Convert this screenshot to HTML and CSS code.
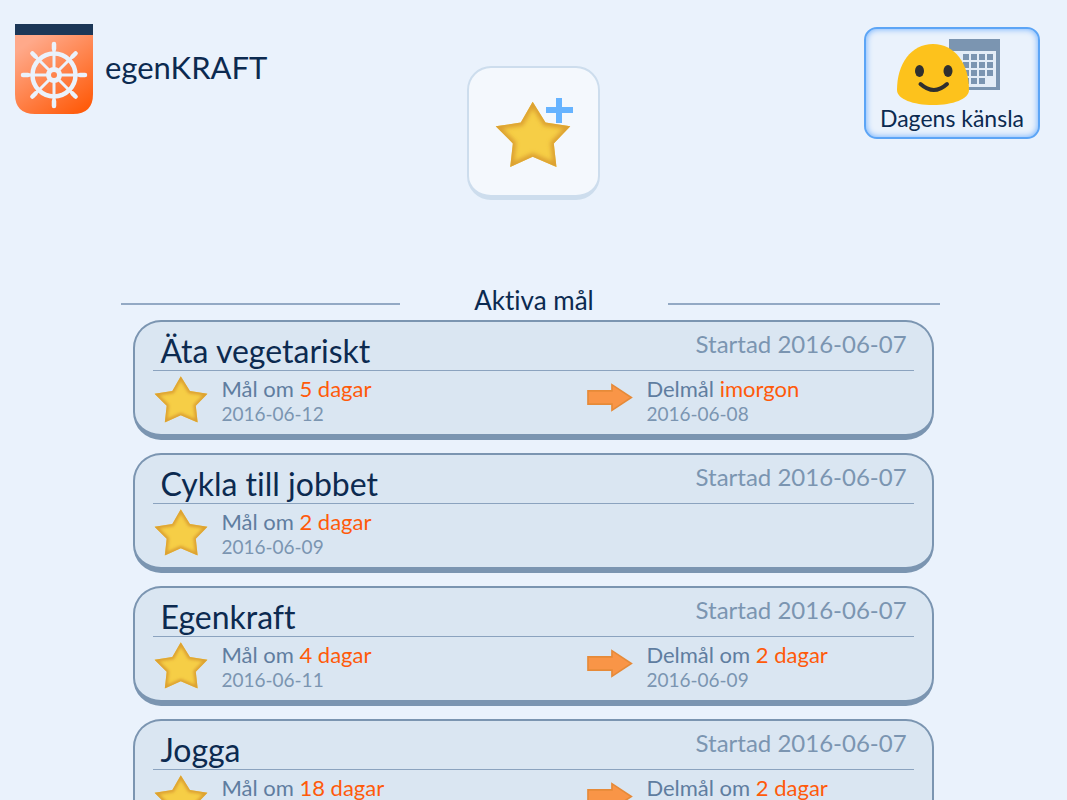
FILE: index.html
```html
<!DOCTYPE html>
<html lang="sv">
<head>
    <meta charset="utf-8">
    <title>egenKRAFT</title>
    <meta name="viewport" content="width=device-width, initial-scale=1.0">
    <link rel="stylesheet" href="styles.css">
</head>
<body>
    <!-- Shared icons -->
    <svg class="icon-defs" aria-hidden="true">
        <defs>
            <filter id="soft" x="-20%" y="-20%" width="140%" height="140%"><feGaussianBlur stdDeviation="6"/></filter>
            <path id="star-shape" d="M114 1 153 64 228 75 178 127 186 198 114 167 46 198 54 127 2 75 78 64Z"/>
            <clipPath id="star-clip"><use href="#star-shape"/></clipPath>
            <symbol id="star" viewBox="0 0 230 200">
                <use href="#star-shape" fill="#f6ce46"/>
                <g clip-path="url(#star-clip)">
                    <use href="#star-shape" fill="none" stroke="#dca030" stroke-width="20" filter="url(#soft)"/>
                </g>
            </symbol>
            <symbol id="arrow" viewBox="0 0 140 88">
                <path d="M3 24H76V5L135 44 76 83V64H3Z" fill="#f99547" stroke="#e68a38" stroke-width="5"/>
            </symbol>
        </defs>
    </svg>

    <header class="top">
        <div class="brand">
            <svg class="logo" viewBox="0 0 78 90" aria-hidden="true">
                <defs>
                    <linearGradient id="logo-fill" x1="0.1" y1="0" x2="0.8" y2="1">
                        <stop offset="0.1" stop-color="#ffa98a"/>
                        <stop offset="1" stop-color="#ff5c0c"/>
                    </linearGradient>
                </defs>
                <path d="M0 11H78V70Q78 90 58 90H20Q0 90 0 70Z" fill="url(#logo-fill)"/>
                <path d="M0 0H78V11H0Z" fill="#1c3757"/>
                <g fill="none" stroke="#eaf2fc" stroke-linecap="round">
                    <circle cx="39" cy="51" r="21.500" stroke-width="4.500"/>
                    <circle cx="39" cy="51" r="5.500" stroke-width="5"/>
                    <path d="M39 44V20M39 58V82M32 51H8M46 51H70M34 46 17 29M44 46 61 29M34 56 17 73M44 56 61 73" stroke-width="3"/>
                    <path d="M39 25V20M39 77V82M13 51H8M65 51H70M20.500 32.500 17.500 29.500M57.500 32.500 60.500 29.500M20.500 69.500 17.500 72.500M57.500 69.500 60.500 72.500" stroke-width="4.500"/>
                </g>
            </svg>
            <h1>egenKRAFT</h1>
        </div>

        <button class="add-goal" type="button" aria-label="Nytt mål">
            <svg viewBox="0 0 78 70" aria-hidden="true">
                <use href="#star" x="0" y="3" width="76" height="67"/>
                <path d="M61 0H67V9H78V15H67V25H61V15H51V9H61Z" fill="#66b3ff"/>
            </svg>
        </button>

        <button class="mood" type="button">
            <svg viewBox="0 0 104 66" aria-hidden="true">
                <g>
                    <path d="M52 0H103V51H52Z" fill="#7b95b1"/>
                    <path d="M54 12H99V48H54Z" fill="#e4edf7"/>
                    <path d="M66 18H98M66 26H98M66 34H98M58 42H89" stroke="#7b95b1" stroke-width="6" stroke-dasharray="6 2"/>
                </g>
                <path d="M36 5C58 5 72 25 72 51C72 60 56 66 36 66S0 60 0 51C0 25 14 5 36 5Z" fill="#fdc21c"/>
                <ellipse cx="22.500" cy="32" rx="4.500" ry="6" fill="#2f2f2f"/>
                <ellipse cx="51" cy="32" rx="4.500" ry="6" fill="#2f2f2f"/>
                <path d="M23.500 45Q37 57 50 45" fill="none" stroke="#2f2f2f" stroke-width="4" stroke-linecap="round"/>
            </svg>
            <span>Dagens känsla</span>
        </button>
    </header>

    <main>
        <h2 class="section-title">Aktiva mål</h2>

        <ul class="goals">
            <li class="goal">
                <div class="goal-head">
                    <h3>Äta vegetariskt</h3>
                    <span class="started">Startad 2016-06-07</span>
                </div>
                <div class="goal-body">
                    <div class="target">
                        <svg class="star" aria-hidden="true"><use href="#star"/></svg>
                        <div>
                            <p>Mål om <em>5 dagar</em></p>
                            <time>2016-06-12</time>
                        </div>
                    </div>
                    <div class="target">
                        <svg class="arrow" aria-hidden="true"><use href="#arrow"/></svg>
                        <div>
                            <p>Delmål <em>imorgon</em></p>
                            <time>2016-06-08</time>
                        </div>
                    </div>
                </div>
            </li>
            <li class="goal">
                <div class="goal-head">
                    <h3>Cykla till jobbet</h3>
                    <span class="started">Startad 2016-06-07</span>
                </div>
                <div class="goal-body">
                    <div class="target">
                        <svg class="star" aria-hidden="true"><use href="#star"/></svg>
                        <div>
                            <p>Mål om <em>2 dagar</em></p>
                            <time>2016-06-09</time>
                        </div>
                    </div>
                </div>
            </li>
            <li class="goal">
                <div class="goal-head">
                    <h3>Egenkraft</h3>
                    <span class="started">Startad 2016-06-07</span>
                </div>
                <div class="goal-body">
                    <div class="target">
                        <svg class="star" aria-hidden="true"><use href="#star"/></svg>
                        <div>
                            <p>Mål om <em>4 dagar</em></p>
                            <time>2016-06-11</time>
                        </div>
                    </div>
                    <div class="target">
                        <svg class="arrow" aria-hidden="true"><use href="#arrow"/></svg>
                        <div>
                            <p>Delmål om <em>2 dagar</em></p>
                            <time>2016-06-09</time>
                        </div>
                    </div>
                </div>
            </li>
            <li class="goal">
                <div class="goal-head">
                    <h3>Jogga</h3>
                    <span class="started">Startad 2016-06-07</span>
                </div>
                <div class="goal-body">
                    <div class="target">
                        <svg class="star" aria-hidden="true"><use href="#star"/></svg>
                        <div>
                            <p>Mål om <em>18 dagar</em></p>
                        </div>
                    </div>
                    <div class="target">
                        <svg class="arrow" aria-hidden="true"><use href="#arrow"/></svg>
                        <div>
                            <p>Delmål om <em>2 dagar</em></p>
                        </div>
                    </div>
                </div>
            </li>
        </ul>
    </main>
</body>
</html>
```
FILE: styles.css
```css
* { box-sizing: border-box; }
html { scrollbar-width: none; }
body { margin: 0; background: #eaf2fc; color: #0c2a50; font-family: Lato, "Open Sans", sans-serif; font-variant-ligatures: none; }
h1, h2, h3, p, ul { margin: 0; padding: 0; font-weight: normal; }
em { font-style: normal; color: #ff5a0a; }
button { font: inherit; color: inherit; cursor: pointer; }
.icon-defs { position: absolute; width: 0; height: 0; }

.top { display: grid; grid-template-columns: 1fr auto 1fr; align-items: start; padding: 24px 27px 0 15px; }
.brand { display: flex; align-items: center; gap: 12px; }
.logo { width: 78px; height: 90px; }
h1 { font-size: 31px; line-height: 40px; padding-bottom: 4px; }

.add-goal { width: 133px; height: 134px; margin: 42px 0 0 12px; padding: 3px 0 0 1px; display: flex; align-items: center; justify-content: center; background: #f4f8fd; border: 2px solid #cddded; border-bottom-width: 5px; border-radius: 24px; }
.add-goal svg { width: 78px; height: 70px; }

.mood { justify-self: end; width: 176px; height: 112px; margin-top: 3px; padding: 3px 0 0; display: flex; flex-direction: column; align-items: center; justify-content: center; background: #eaf2fc; border: 2px solid #5ca5f6; border-radius: 13px; box-shadow: inset 0 0 6px #66aaff; }
.mood svg { width: 104px; height: 66px; margin-right: 6px; }
.mood span { font-size: 23px; line-height: 26px; }

.section-title { display: grid; grid-template-columns: 279px auto 272px; justify-content: space-between; align-items: center; width: 826px; max-width: 100%; margin: 84px auto 3px; padding-right: 6px; font-size: 26px; line-height: 33px; }
.section-title::before, .section-title::after { content: ""; height: 2px; margin-top: 7px; background: #93a9c4; }

.goals { width: 75%; margin: 0 auto; list-style: none; display: flex; flex-direction: column; gap: 13px; }
.goal { height: 120px; padding: 0 18px; background: #dae6f2; border: 2px solid #7b95b1; border-bottom-width: 6px; border-radius: 28px; }
.goal-head { display: flex; justify-content: space-between; height: 49px; padding: 0 7px; border-bottom: 1px solid #8ba3bf; }
h3 { font-size: 32px; line-height: 58px; }
.started { font-size: 24px; line-height: 44px; color: #7b95b1; }
.goal-body { display: grid; grid-template-columns: 433px 1fr; padding-left: 1px; }
.target { display: flex; align-items: flex-start; gap: 13px; padding-top: 5px; color: #5f7da0; }
.target p { font-size: 22px; line-height: 26px; }
.target time { display: block; font-size: 19px; line-height: 24px; color: #7b95b1; }
.star { width: 54px; height: 47px; }
.arrow { width: 46px; height: 29px; margin-top: 7px; }
```
